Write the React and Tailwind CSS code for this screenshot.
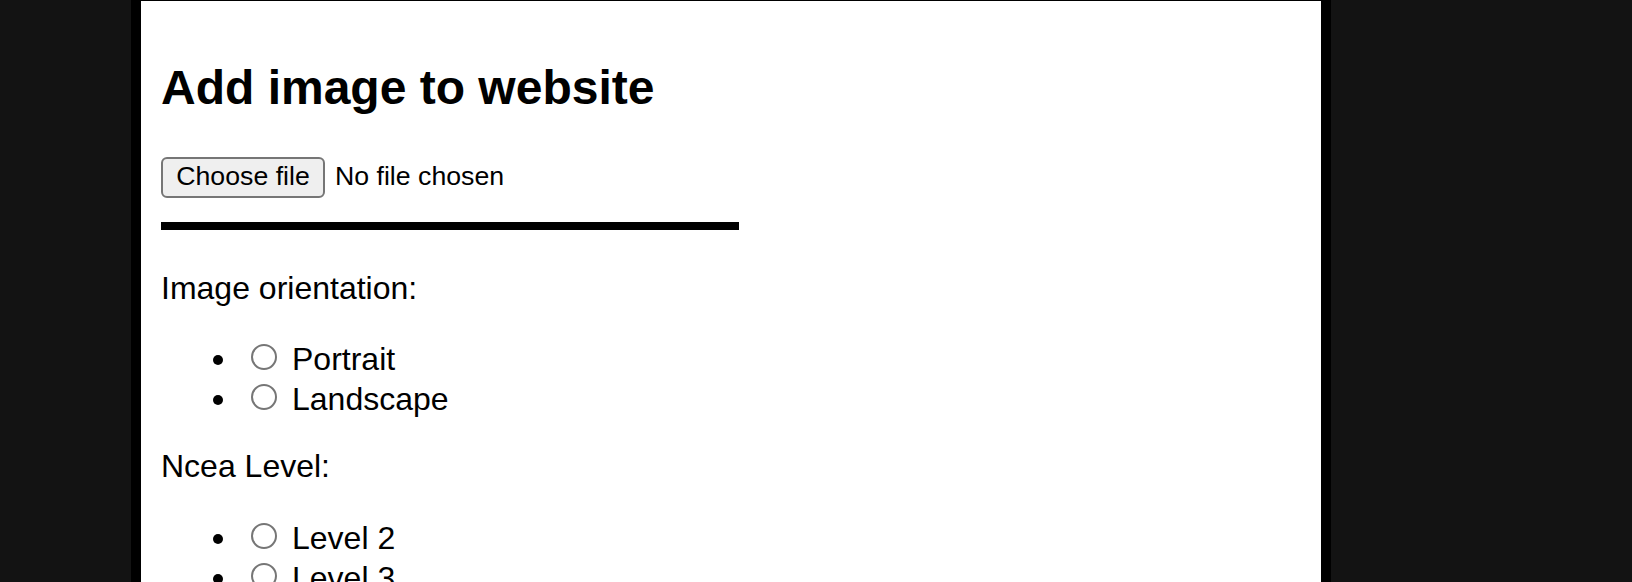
// Upload form page — 2x scaled static mock
const RadioRow = ({ label }) => (
  <li className="flex h-[40px] items-start">
    <span className="ml-[52px] mt-[16px] h-[10px] w-[10px] rounded-full bg-black"></span>
    <span className="ml-[28px] mt-[5px] h-[26px] w-[26px] rounded-full border-2 border-[#767676] bg-white"></span>
    <span className="ml-[15px] text-[32px] leading-[40px]">{label}</span>
  </li>
);

export default function App() {
  return (
    <div className="h-[582px] overflow-hidden bg-[#131313] font-['Liberation_Sans',Arial,sans-serif] text-black">
      <div className="ml-[131px] h-full w-[1200px] border-x-[10px] border-t border-black bg-white px-[20px] pt-[63px]">
        <h2 className="h-[48px] text-[48px] font-bold leading-[48px]">Add image to website</h2>

        <div className="mt-[45px] flex h-[41px] items-center">
          <button className="flex h-[41px] w-[164px] items-center justify-center rounded-[6px] border-2 border-[#767676] bg-[#efefef] pb-[4px] text-[26.7px] leading-[32px]">
            Choose file
          </button>
          <span className="ml-[10px] pb-[4px] text-[26.7px] leading-[32px]">No file chosen</span>
        </div>

        <div className="mt-[24px] h-[8px] w-[578px] bg-black"></div>

        <p className="mt-[38px] text-[32px] leading-[40px]">Image orientation:</p>
        <ul className="mt-[31px]">
          <RadioRow label="Portrait" />
          <RadioRow label="Landscape" />
        </ul>

        <p className="mt-[27px] text-[32px] leading-[40px]">Ncea Level:</p>
        <ul className="mt-[32px]">
          <RadioRow label="Level 2" />
          <RadioRow label="Level 3" />
        </ul>
      </div>
    </div>
  );
}
